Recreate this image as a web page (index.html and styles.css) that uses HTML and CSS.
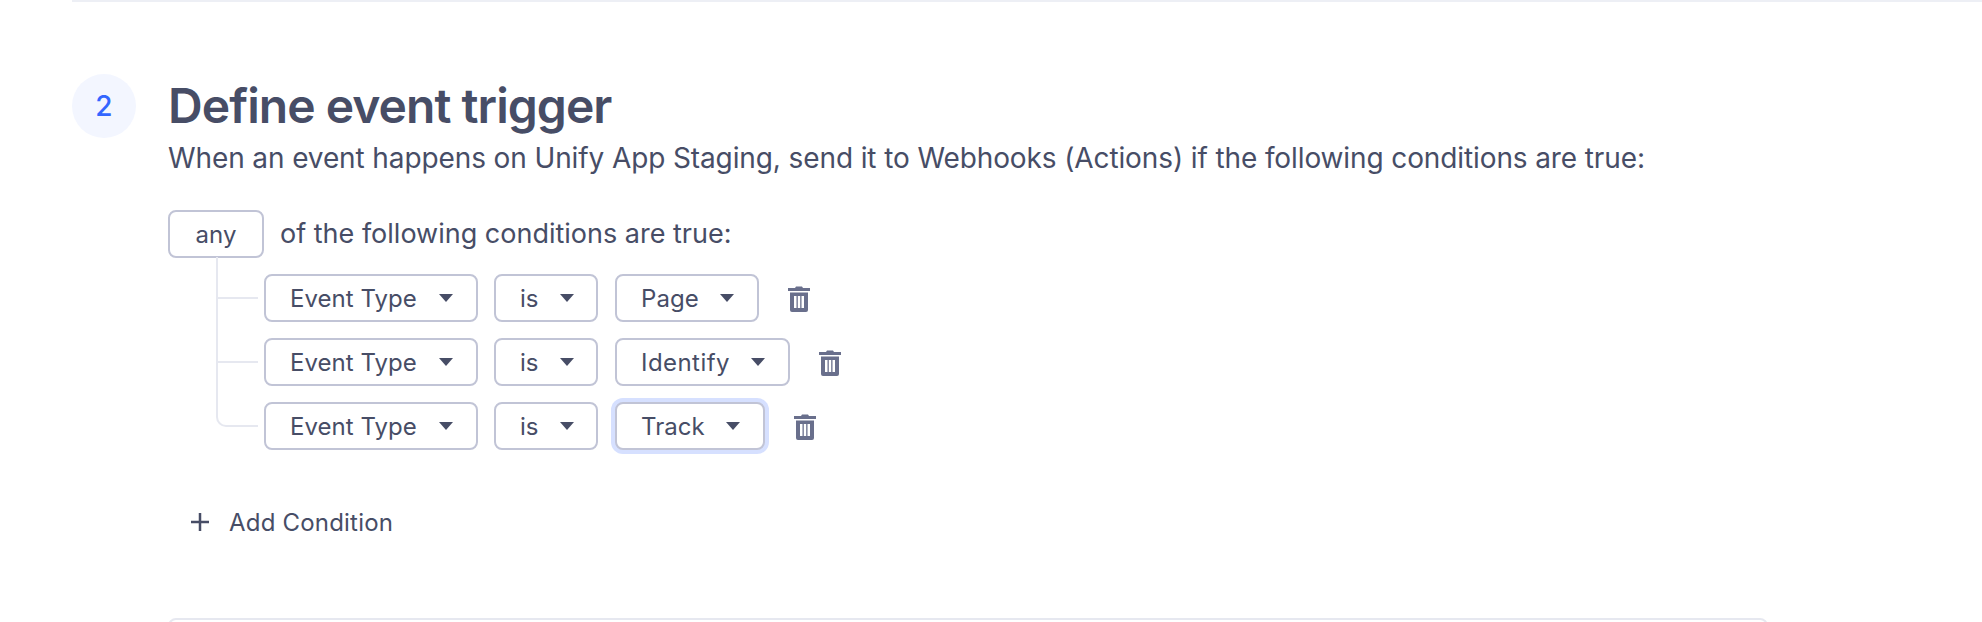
FILE: index.html
```html
<!DOCTYPE html>
<html>
    <head>
        <link rel="stylesheet" href="styles.css">
    </head>
    <body>
        <div class="page">
            <div class="step">
                <div class="step-num">2</div>
                <div class="step-body">
                    <h1>Define event trigger</h1>
                    <p class="desc">When an event happens on Unify App Staging, send it to Webhooks (Actions) if the following conditions are true:</p>

                    <div class="match">
                        <button class="any-btn">any</button>
                        <span class="match-text">of the following conditions are true:</span>
                    </div>

                    <div class="conditions">
                        <div class="cond-row">
                            <button class="select select-field">Event Type <span class="caret"></span></button>
                            <button class="select select-op">is <span class="caret"></span></button>
                            <button class="select select-value">Page <span class="caret"></span></button>
                            <svg class="trash" viewBox="0 0 24 28"><path d="M9 2.500h6l1 1.500h7v3H1V4h7zM3 8.500h18V26a2 2 0 0 1-2 2H5a2 2 0 0 1-2-2zM7 12v12h2.500V12zM10.800 12v12h2.400V12zM14.500 12v12H17V12z" fill-rule="evenodd"/></svg>
                        </div>
                        <div class="cond-row">
                            <button class="select select-field">Event Type <span class="caret"></span></button>
                            <button class="select select-op">is <span class="caret"></span></button>
                            <button class="select select-value select-identify">Identify <span class="caret"></span></button>
                            <svg class="trash" viewBox="0 0 24 28"><path d="M9 2.500h6l1 1.500h7v3H1V4h7zM3 8.500h18V26a2 2 0 0 1-2 2H5a2 2 0 0 1-2-2zM7 12v12h2.500V12zM10.800 12v12h2.400V12zM14.500 12v12H17V12z" fill-rule="evenodd"/></svg>
                        </div>
                        <div class="cond-row">
                            <button class="select select-field">Event Type <span class="caret"></span></button>
                            <button class="select select-op">is <span class="caret"></span></button>
                            <button class="select select-value focused">Track <span class="caret"></span></button>
                            <svg class="trash" viewBox="0 0 24 28"><path d="M9 2.500h6l1 1.500h7v3H1V4h7zM3 8.500h18V26a2 2 0 0 1-2 2H5a2 2 0 0 1-2-2zM7 12v12h2.500V12zM10.800 12v12h2.400V12zM14.500 12v12H17V12z" fill-rule="evenodd"/></svg>
                        </div>
                    </div>

                    <button class="add-btn">
                        <svg class="plus" viewBox="0 0 20 20"><path d="M10 1v18M1 10h18"/></svg>
                        Add Condition
                    </button>

                    <div class="next-box"></div>
                </div>
            </div>
        </div>
    </body>
</html>
```

FILE: styles.css
```css
html, body {
    height: 622px;
    overflow: hidden;
}

body {
    margin: 0;
    font-family: Inter, sans-serif;
    color: #474d66;
    background-color: #ffffff;
}

.page {
    height: 620px;
    margin-left: 72px;
    border-top: 2px solid #edeff5;
    overflow: hidden;
}

.step {
    display: flex;
    gap: 32px;
    padding-top: 72px;
}

.step-num {
    flex: none;
    width: 64px;
    height: 64px;
    border-radius: 50%;
    display: flex;
    align-items: center;
    justify-content: center;
    font-size: 28px;
    font-weight: 500;
    color: #3366ff;
    background-color: #f3f6ff;
}

.step-body {
    width: 1600px;
}

h1 {
    margin: 0;
    font-size: 48px;
    line-height: 64px;
    font-weight: 600;
    letter-spacing: -0.95px;
}

.desc {
    margin: 0;
    font-size: 28px;
    line-height: 40px;
    letter-spacing: -0.11px;
}

.match {
    display: flex;
    align-items: center;
    gap: 16px;
    margin-top: 32px;
    font-size: 27px;
}

.match-text {
    margin-top: -2px;
}

button {
    font-family: Inter, sans-serif;
    color: #474d66;
    background-color: #ffffff;
    cursor: pointer;
}

.any-btn {
    width: 96px;
    height: 48px;
    padding: 0;
    font-size: 24px;
    border: 2px solid #c1c4d6;
    border-radius: 8px;
}

.conditions {
    display: flex;
    flex-direction: column;
    gap: 16px;
    margin-top: 16px;
    margin-left: 96px;
}

.cond-row {
    position: relative;
    display: flex;
    align-items: center;
    gap: 16px;
    height: 48px;
}

.cond-row::before {
    content: "";
    position: absolute;
    left: -48px;
    bottom: 23px;
    width: 40px;
    height: 62px;
    border-left: 2px solid #e6e8f0;
    border-bottom: 2px solid #e6e8f0;
}

.cond-row:first-child::before {
    height: 40px;
}

.cond-row:last-child::before {
    border-bottom-left-radius: 10px;
}

.select {
    display: flex;
    align-items: center;
    justify-content: space-between;
    height: 48px;
    padding: 0 23px 0 24px;
    font-size: 24px;
    letter-spacing: 0.05px;
    border: 2px solid #c1c4d6;
    border-radius: 8px;
}

.select-field {
    width: 214px;
}

.select-op {
    width: 104px;
}

.select-value {
    margin-left: 1px;
}

.select-identify {
    letter-spacing: 0.45px;
}

.caret {
    width: 0;
    height: 0;
    margin-left: 21px;
    border-left: 7px solid transparent;
    border-right: 7px solid transparent;
    border-top: 8px solid #474d66;
}

.focused {
    box-shadow: 0 0 0 4px #d6e0ff;
}

.trash {
    width: 24px;
    height: 28px;
    margin-left: 12px;
    fill: #696f8c;
}

.add-btn {
    display: flex;
    align-items: center;
    gap: 19px;
    height: 48px;
    margin-top: 48px;
    padding: 0 0 0 22px;
    font-size: 24px;
    font-weight: 400;
    letter-spacing: 0.2px;
    border: none;
}

.plus {
    width: 20px;
    height: 20px;
    fill: none;
    stroke: #474d66;
    stroke-width: 2.500;
}

.next-box {
    height: 60px;
    margin-top: 72px;
    border: 2px solid #e6e8f0;
    border-radius: 8px;
}
```
